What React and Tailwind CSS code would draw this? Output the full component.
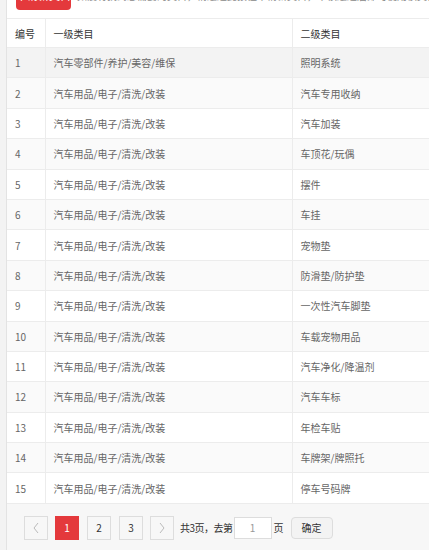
const rows = [
  ["1", "汽车零部件/养护/美容/维保", "照明系统"],
  ["2", "汽车用品/电子/清洗/改装", "汽车专用收纳"],
  ["3", "汽车用品/电子/清洗/改装", "汽车加装"],
  ["4", "汽车用品/电子/清洗/改装", "车顶花/玩偶"],
  ["5", "汽车用品/电子/清洗/改装", "摆件"],
  ["6", "汽车用品/电子/清洗/改装", "车挂"],
  ["7", "汽车用品/电子/清洗/改装", "宠物垫"],
  ["8", "汽车用品/电子/清洗/改装", "防滑垫/防护垫"],
  ["9", "汽车用品/电子/清洗/改装", "一次性汽车脚垫"],
  ["10", "汽车用品/电子/清洗/改装", "车载宠物用品"],
  ["11", "汽车用品/电子/清洗/改装", "汽车净化/降温剂"],
  ["12", "汽车用品/电子/清洗/改装", "汽车车标"],
  ["13", "汽车用品/电子/清洗/改装", "年检车贴"],
  ["14", "汽车用品/电子/清洗/改装", "车牌架/牌照托"],
  ["15", "汽车用品/电子/清洗/改装", "停车号码牌"],
];

function PageBtn({ children, active, muted }) {
  return (
    <button
      className={
        active
          ? "h-6 w-6 flex items-center justify-center bg-[#e4393c] text-white border border-[#e4393c]"
          : muted
          ? "h-6 w-6 flex items-center justify-center bg-[#f7f7f7] text-[#bbb] border border-[#ddd]"
          : "h-6 w-6 flex items-center justify-center bg-[#f7f7f7] text-[#333] border border-[#ddd]"
      }
    >
      {children}
    </button>
  );
}

export default function App() {
  return (
    <div className="h-[550px] w-[429px] overflow-hidden flex bg-[#f7f7f7] text-[10px] font-['Noto_Sans_CJK_SC','Noto_Sans',sans-serif]">
      <div className="w-[7px] shrink-0 bg-[#f3f3f3] border-r border-[#e3e3e3]" />
      <div className="flex-1 min-w-0 flex flex-col">
        <div className="bg-white">
          <div className="flex items-center gap-[6px] pl-[9px] mt-[-20px] h-[30px] whitespace-nowrap">
            <button className="h-[30px] w-[62px] rounded-sm bg-[#e4393c] text-white text-[11px]">申请新类目</button>
            <span className="text-[#888]">如没有找到您需要的类目，请通过此按钮申请新类目，审核通过后即可使用该类目发布商品</span>
          </div>
          <div className="h-[8px]" />
        </div>
        <div className="overflow-hidden bg-white">
          <table className="w-[480px] table-fixed border-collapse text-left">
            <colgroup>
              <col className="w-[38px]" />
              <col className="w-[247px]" />
              <col />
            </colgroup>
            <thead>
              <tr className="h-[29px] border-y border-[#ececec] text-[#333]">
                <th className="font-normal pl-[8px] border-r border-[#ececec]">编号</th>
                <th className="font-normal pl-[8px] border-r border-[#ececec]">一级类目</th>
                <th className="font-normal pl-[8px]">二级类目</th>
              </tr>
            </thead>
            <tbody className="text-[#666]">
              {rows.map((r, i) => (
                <tr
                  key={r[0]}
                  className={
                    "h-[30.4px] border-b border-[#ececec] " +
                    (i === 0 ? "bg-[#f3f3f3]" : i % 2 === 1 ? "bg-[#fafafa]" : "bg-white")
                  }
                >
                  <td className="pl-[8px] border-r border-[#ececec]">{r[0]}</td>
                  <td className="pl-[8px] border-r border-[#ececec]">{r[1]}</td>
                  <td className="pl-[8px]">{r[2]}</td>
                </tr>
              ))}
            </tbody>
          </table>
        </div>
        <div className="flex items-center pl-[17px] pt-[12px] text-[#333]">
          <PageBtn muted>
            <svg width="8" height="12" viewBox="0 0 8 12" fill="none" stroke="currentColor" strokeWidth="1">
              <path d="M6 1L2 6l4 5" />
            </svg>
          </PageBtn>
          <div className="w-[7px]" />
          <PageBtn active>1</PageBtn>
          <div className="w-[8px]" />
          <PageBtn>2</PageBtn>
          <div className="w-[8px]" />
          <PageBtn>3</PageBtn>
          <div className="w-[7px]" />
          <PageBtn muted>
            <svg width="8" height="12" viewBox="0 0 8 12" fill="none" stroke="currentColor" strokeWidth="1">
              <path d="M2 1l4 5-4 5" />
            </svg>
          </PageBtn>
          <span className="ml-[6px] tracking-[-0.5px]">共3页，去第</span>
          <div className="ml-[1px] h-[22px] w-[38px] bg-white border border-[#ddd] flex items-center justify-center text-[#999]">1</div>
          <span className="ml-[2px]">页</span>
          <button className="ml-[7px] h-[22px] w-[42px] bg-[#f3f3f3] border border-[#ddd] rounded-sm text-[#333]">确定</button>
        </div>
      </div>
    </div>
  );
}
